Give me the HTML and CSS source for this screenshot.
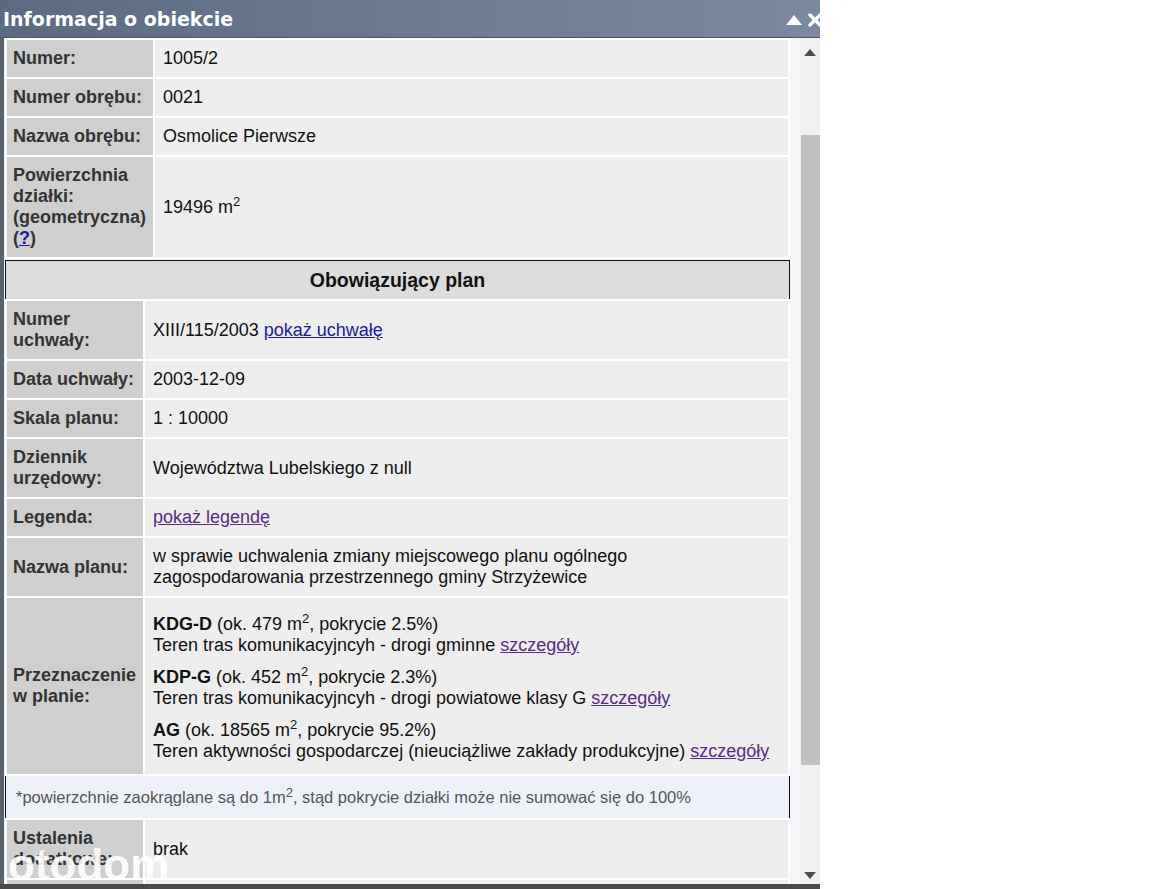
FILE: index.html
```html
<!DOCTYPE html>
<html lang="pl">
<head>
  <meta charset="UTF-8">
  <title>Informacja o obiekcie</title>
  <link rel="stylesheet" href="styles.css">
</head>
<body>
  <div class="window">
    <div class="titlebar">
      <span class="title">Informacja o obiekcie</span>
      <span class="tools">
        <svg class="tool-up" width="18" height="12" viewBox="0 0 18 12"><polygon points="9,1 17,11 1,11" fill="#fff"/></svg>
        <svg class="tool-close" width="16" height="16" viewBox="0 0 16 16"><path d="M3 3 L13 13 M13 3 L3 13" stroke="#fff" stroke-width="3.4" stroke-linecap="round"/></svg>
      </span>
    </div>

    <div class="body">
      <div class="content">
        <table class="info info-parcel">
          <tr>
            <th>Numer:</th>
            <td>1005/2</td>
          </tr>
          <tr>
            <th>Numer obrębu:</th>
            <td>0021</td>
          </tr>
          <tr>
            <th>Nazwa obrębu:</th>
            <td>Osmolice Pierwsze</td>
          </tr>
          <tr>
            <th>Powierzchnia działki: (geometryczna) (<a href="#" class="help">?</a>)</th>
            <td>19496 m<sup>2</sup></td>
          </tr>
        </table>

        <div class="section-head">Obowiązujący plan</div>

        <table class="info info-plan">
          <tr>
            <th>Numer uchwały:</th>
            <td>XIII/115/2003 <a href="#" class="link">pokaż uchwałę</a></td>
          </tr>
          <tr>
            <th>Data uchwały:</th>
            <td>2003-12-09</td>
          </tr>
          <tr>
            <th>Skala planu:</th>
            <td>1 : 10000</td>
          </tr>
          <tr>
            <th>Dziennik urzędowy:</th>
            <td>Województwa Lubelskiego z null</td>
          </tr>
          <tr>
            <th>Legenda:</th>
            <td><a href="#" class="link visited">pokaż legendę</a></td>
          </tr>
          <tr>
            <th>Nazwa planu:</th>
            <td>w sprawie uchwalenia zmiany miejscowego planu ogólnego zagospodarowania przestrzennego gminy Strzyżewice</td>
          </tr>
          <tr>
            <th>Przeznaczenie w planie:</th>
            <td class="zones">
              <div class="zone">
                <b>KDG-D</b> (ok. 479 m<sup>2</sup>, pokrycie 2.5%)<br>
                Teren tras komunikacyjncyh - drogi gminne <a href="#" class="link visited">szczegóły</a>
              </div>
              <div class="zone">
                <b>KDP-G</b> (ok. 452 m<sup>2</sup>, pokrycie 2.3%)<br>
                Teren tras komunikacyjncyh - drogi powiatowe klasy G <a href="#" class="link visited">szczegóły</a>
              </div>
              <div class="zone">
                <b>AG</b> (ok. 18565 m<sup>2</sup>, pokrycie 95.2%)<br>
                Teren aktywności gospodarczej (nieuciążliwe zakłady produkcyjne) <a href="#" class="link visited">szczegóły</a>
              </div>
            </td>
          </tr>
        </table>

        <div class="footnote">*powierzchnie zaokrąglane są do 1m<sup>2</sup>, stąd pokrycie działki może nie sumować się do 100%</div>

        <table class="info info-plan">
          <tr>
            <th>Ustalenia dodatkowe:</th>
            <td>brak</td>
          </tr>
          <tr>
            <th>&nbsp;</th>
            <td>&nbsp;</td>
          </tr>
        </table>
      </div>

      <div class="scrollbar">
        <div class="sb-btn sb-up">
          <svg width="12" height="7" viewBox="0 0 12 7"><polygon points="6,0 12,7 0,7" fill="#505050"/></svg>
        </div>
        <div class="sb-track"><div class="sb-thumb"></div></div>
        <div class="sb-btn sb-down">
          <svg width="12" height="7" viewBox="0 0 12 7"><polygon points="0,0 12,0 6,7" fill="#505050"/></svg>
        </div>
      </div>
    </div>

    <div class="watermark">otodom</div>
  </div>
</body>
</html>
```

FILE: styles.css
```css
body {
  margin: 0;
  padding: 0;
  background: #FFFFFF;
  font-family: 'Liberation Sans', Arial, sans-serif;
}

.window {
  position: relative;
  width: 820px;
  height: 889px;
  overflow: hidden;
  background: #f3f5f9;
  border-bottom: 5px solid #4a4a4a;
  box-sizing: border-box;
}

.titlebar {
  height: 38px;
  display: flex;
  align-items: center;
  justify-content: space-between;
  background: linear-gradient(to right, #5b6a80, #6f7e94 60%, #7b8aa0);
  border-bottom: 1px solid #4c5666;
  box-sizing: border-box;
}

.title {
  padding-left: 3px;
  font-family: 'DejaVu Sans', Verdana, sans-serif;
  font-weight: bold;
  font-size: 19px;
  color: #fff;
}

.tools {
  display: flex;
  align-items: center;
  gap: 4px;
  margin-right: -3px;
  padding-top: 2px;
}

.body {
  display: flex;
  height: 846px;
  border-left: 4px solid #5a626e;
}

.content {
  flex: 1;
  overflow: hidden;
  padding: 0 10px 0 1px;
}

.info {
  width: 785px;
  border-spacing: 2px;
  background: #fff;
  font-size: 18px;
  line-height: 21px;
}

.info th {
  background: #cfcfcf;
  color: #333;
  font-weight: bold;
  text-align: left;
  vertical-align: middle;
  padding: 8px 3px 8px 6px;
  box-sizing: border-box;
}

.info-parcel th {
  width: 146px;
}

.info-plan th {
  width: 136px;
}

.info td {
  background: #eeeeee;
  color: #111;
  padding: 8px 8px;
  vertical-align: middle;
}

sup {
  font-size: 13px;
  line-height: 0;
}

.help {
  color: #1a1aa6;
  font-weight: bold;
}

.link {
  color: #1a1aa6;
}

.link.visited {
  color: #5a2a8a;
}

.section-head {
  margin-top: 1px;
  height: 39px;
  width: 785px;
  box-sizing: border-box;
  border: 1px solid #111;
  border-bottom: none;
  background: #dcdcdc;
  display: flex;
  align-items: center;
  justify-content: center;
  font-weight: bold;
  font-size: 19.5px;
  color: #111;
}

.info td.zones {
  padding: 8px 8px 12px;
}

.zone {
  padding-top: 8px;
}

.zone + .zone {
  margin-top: 3px;
}

.footnote {
  width: 785px;
  height: 42px;
  box-sizing: border-box;
  border-left: 1px solid #111;
  border-right: 1px solid #111;
  background: #eef2f8;
  padding: 11px 10px;
  font-size: 16.5px;
  line-height: 20px;
  color: #555;
}

.scrollbar {
  width: 20px;
  display: flex;
  flex-direction: column;
  background: #f1f1f1;
}

.sb-btn {
  display: flex;
  align-items: center;
  justify-content: center;
}

.sb-up {
  height: 28px;
}

.sb-down {
  height: 18px;
}

.sb-track {
  flex: 1;
  padding-top: 69px;
}

.sb-thumb {
  margin-left: 1px;
  height: 630px;
  background: #c1c1c1;
}

.watermark {
  position: absolute;
  left: 8px;
  top: 843px;
  font-size: 44px;
  line-height: 44px;
  font-weight: bold;
  color: #fff;
  opacity: 0.9;
}
```
